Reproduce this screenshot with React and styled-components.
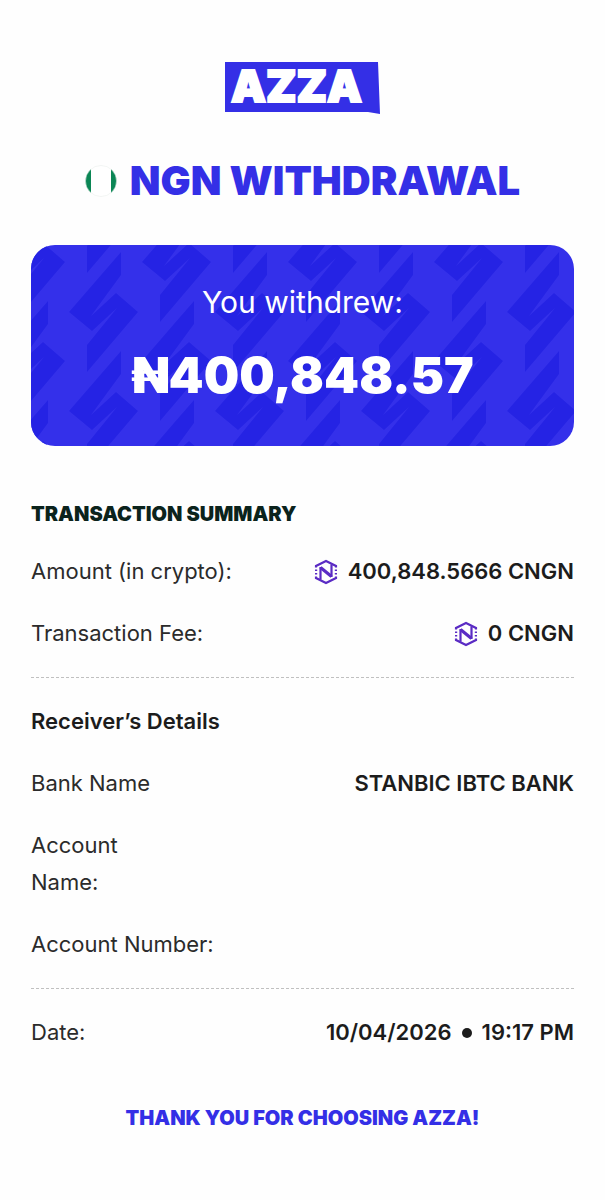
import React from 'react';
import styled, { createGlobalStyle } from 'styled-components'

const GlobalStyle = createGlobalStyle`
  * {
    box-sizing: border-box;
  }
  body {
    margin: 0;
    background-color: #fefefe;
    font-family: Inter, "Liberation Sans", sans-serif;
    color: #1c1c1c;
  }
`

const Receipt = styled.main`
  display: flex;
  flex-direction: column;
  padding: 62px 31px 64px;
`
const LogoLink = styled.a`
  align-self: center;
  height: 52px;
`
const LogoMark = styled.svg`
  display: block;
  overflow: visible;
`
const Title = styled.h1`
  display: flex;
  justify-content: center;
  align-items: center;
  gap: 13px;
  margin: 43px 0 40px;
  font-size: 40px;
  line-height: 48px;
  font-weight: 900;
  color: #342fe6;
`
const Card = styled.section`
  position: relative;
  overflow: hidden;
  padding: 34px 20px 38px;
  border-radius: 24px;
  background-color: #3430ea;
  color: #ffffff;
  text-align: center;
`
const CardPattern = styled.svg`
  position: absolute;
  top: 0;
  left: 0;
  width: 100%;
  height: 100%;
`
const CardLabel = styled.p`
  position: relative;
  margin: 0;
  font-size: 30px;
  line-height: 47px;
  font-weight: 400;
`
const CardAmount = styled.p`
  position: relative;
  margin: 17px 0 0;
  font-size: 50px;
  line-height: 65px;
  font-weight: 900;
`
const Heading = styled.h2`
  margin: 54px 0 25px;
  font-size: 20px;
  line-height: 28px;
  font-weight: 900;
  color: #0b231c;
`
const Details = styled.dl`
  display: flex;
  flex-direction: column;
  gap: 25px;
  margin: 0;
`
const Row = styled.div`
  display: flex;
  justify-content: space-between;
  font-size: 22px;
  line-height: 37px;
`
const Label = styled.dt`
  max-width: ${props => props.$narrow ? "120px" : "none"};
  color: #2b2b2b;
`
const Value = styled.dd`
  display: flex;
  align-items: center;
  gap: 10px;
  margin: 0;
  font-weight: 600;
`
const SubHeading = styled.h3`
  margin: 0 0 25px;
  font-size: 22px;
  line-height: 37px;
  font-weight: 600;
`
const Divider = styled.hr`
  width: 100%;
  margin: 25px 0;
  border: 0;
  border-top: 1px dashed #c0c0c0;
`
const Dot = styled.span`
  width: 10px;
  height: 10px;
  border-radius: 50%;
  background-color: #1c1c1c;
`
const Thanks = styled.p`
  margin: 53px 0 0;
  font-size: 20px;
  line-height: 28px;
  font-weight: 900;
  text-align: center;
  color: #342fe6;
`

const Logo = () => (
  <LogoMark width="156" height="52" viewBox="0 0 156 52" role="img" aria-label="Azza">
    <path d="M0 0H153L155 52L143 50H0Z" fill="#342fe6" />
    <text x="6" y="40" fill="#ffffff" stroke="#ffffff" strokeWidth="2" fontFamily="Inter, sans-serif" fontSize="44" fontWeight="900">AZZA</text>
  </LogoMark>
)

const Flag = () => (
  <svg width="32" height="32" viewBox="0 0 32 32" aria-hidden="true">
    <clipPath id="flag"><circle cx="16" cy="16" r="15.5" /></clipPath>
    <g clipPath="url(#flag)">
      <rect width="32" height="32" fill="#ffffff" />
      <rect width="6" height="32" fill="#0b8655" />
      <rect x="26" width="6" height="32" fill="#0b8655" />
    </g>
    <circle cx="16" cy="16" r="15.5" fill="none" stroke="#e6ece9" strokeWidth="0.5" />
  </svg>
)

const Coin = () => (
  <svg width="24" height="26" viewBox="0 0 24 26" fill="none" stroke="#5a2bc4" strokeWidth="2.2" aria-hidden="true">
    <path d="M2 8.500V7L12 2L22 7V8.500M2 17.500V19L12 24L22 19V17.500" />
    <path d="M6.500 20.500V8M17.500 18V5.500" />
    <path d="M6.500 8.500L17.500 17.500" strokeWidth="3.200" />
    <path d="M1 11.300H3.200M1 14.700H3.200M20.800 11.300H23M20.800 14.700H23" strokeWidth="1.600" />
  </svg>
)

const BOLT = "M90 7L38 67L61 86L86 63L56 100V127L107 67L85 48L60 71L90 30Z"
const BOLT_SPOTS = [[0, 0], [0, -99], [73, -50], [73, 49], [-73, -50], [-73, 49]]

const Bolts = () => (
  <CardPattern aria-hidden="true">
    <pattern id="bolts" width="146" height="99" patternUnits="userSpaceOnUse">
      {BOLT_SPOTS.map(([x, y]) => (
        <path key={`${x},${y}`} d={BOLT} transform={`translate(${x} ${y})`} fill="#2523e4" />
      ))}
    </pattern>
    <rect width="100%" height="100%" fill="url(#bolts)" />
  </CardPattern>
)

const App = () => {
  return (
    <>
      <GlobalStyle />
      <Receipt>
        <LogoLink href="#azza"><Logo /></LogoLink>
        <Title><Flag />NGN WITHDRAWAL</Title>
        <Card>
          <Bolts />
          <CardLabel>You withdrew:</CardLabel>
          <CardAmount>₦400,848.57</CardAmount>
        </Card>
        <Heading>TRANSACTION SUMMARY</Heading>
        <Details>
          <Row><Label>Amount (in crypto):</Label><Value><Coin />400,848.5666 CNGN</Value></Row>
          <Row><Label>Transaction Fee:</Label><Value><Coin />0 CNGN</Value></Row>
        </Details>
        <Divider />
        <SubHeading>Receiver’s Details</SubHeading>
        <Details>
          <Row><Label>Bank Name</Label><Value>STANBIC IBTC BANK</Value></Row>
          <Row><Label $narrow>Account Name:</Label><Value /></Row>
          <Row><Label>Account Number:</Label><Value /></Row>
        </Details>
        <Divider />
        <Details>
          <Row><Label>Date:</Label><Value>10/04/2026<Dot />19:17 PM</Value></Row>
        </Details>
        <Thanks>THANK YOU FOR CHOOSING AZZA!</Thanks>
      </Receipt>
    </>
  )
}

export default App
